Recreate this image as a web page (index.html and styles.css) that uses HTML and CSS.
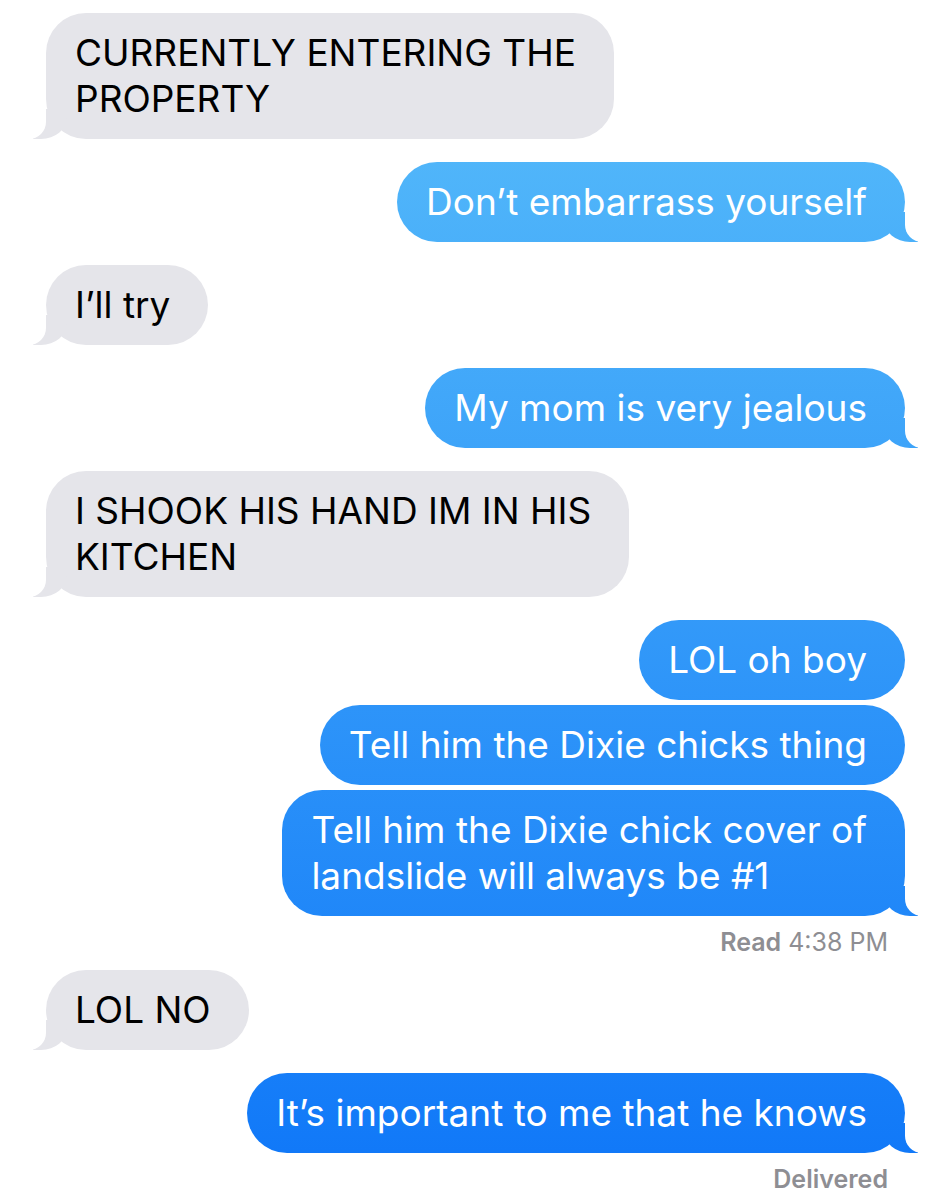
FILE: index.html
```html
<!DOCTYPE html>
<html lang="en">
<head>
<meta charset="utf-8">
<title>Messages</title>
<link rel="stylesheet" href="styles.css">
</head>
<body>
<main class="thread">
  <div class="msg recv tail">CURRENTLY ENTERING THE<br>PROPERTY</div>
  <div class="msg sent tail">Don’t embarrass yourself</div>
  <div class="msg recv tail">I’ll try</div>
  <div class="msg sent tail">My mom is very jealous</div>
  <div class="msg recv tail">I SHOOK HIS HAND IM IN HIS<br>KITCHEN</div>
  <div class="msg sent">LOL oh boy</div>
  <div class="msg sent cont">Tell him the Dixie chicks thing</div>
  <div class="msg sent cont tail">Tell him the Dixie chick cover of<br>landslide will always be #1</div>
  <div class="status"><b>Read</b> 4:38 PM</div>
  <div class="msg recv tail after-status">LOL NO</div>
  <div class="msg sent tail">It’s important to me that he knows</div>
  <div class="status"><b>Delivered</b></div>
</main>
</body>
</html>
```
FILE: styles.css
```css
html {
  background: #ffffff;
}

body {
  margin: 0;
  font-family: Inter, "Noto Sans", sans-serif;
  -webkit-font-smoothing: antialiased;
}

.thread {
  display: flex;
  flex-direction: column;
  padding: 13px 46px 0;
}

.msg {
  position: relative;
  z-index: 0;
  max-width: 760px;
  white-space: nowrap;
  padding: 17px 38px 17px 29px;
  border-radius: 40px;
  font-size: 37px;
  line-height: 46px;
  letter-spacing: 0;
  margin-top: 23px;
}

.msg:first-child {
  margin-top: 0;
}

.recv {
  align-self: flex-start;
  background: #e5e5ea;
  color: #000000;
}

.sent {
  align-self: flex-end;
  color: #ffffff;
  background: linear-gradient(180deg, #5abffa 0px, #0e76f8 1200px) fixed;
}

.cont {
  margin-top: 5px;
}

/* bubble tails */
.tail::before,
.tail::after {
  content: "";
  position: absolute;
  bottom: 0;
  height: 30px;
  z-index: -1;
}

.sent.tail::before {
  right: -13px;
  width: 34px;
  background: inherit;
  border-bottom-left-radius: 26px 22px;
}

.sent.tail::after {
  right: -22px;
  width: 22px;
  background: #ffffff;
  border-bottom-left-radius: 17px;
}

.recv.tail::before {
  left: -13px;
  width: 34px;
  background: #e5e5ea;
  border-bottom-right-radius: 26px 22px;
}

.recv.tail::after {
  left: -22px;
  width: 22px;
  background: #ffffff;
  border-bottom-right-radius: 17px;
}

.status {
  align-self: flex-end;
  margin-right: 17px;
  margin-top: 11px;
  font-size: 25px;
  line-height: 30px;
  color: #8e8e93;
}

.status b {
  font-weight: 600;
}

.after-status {
  margin-top: 13px;
}
```
